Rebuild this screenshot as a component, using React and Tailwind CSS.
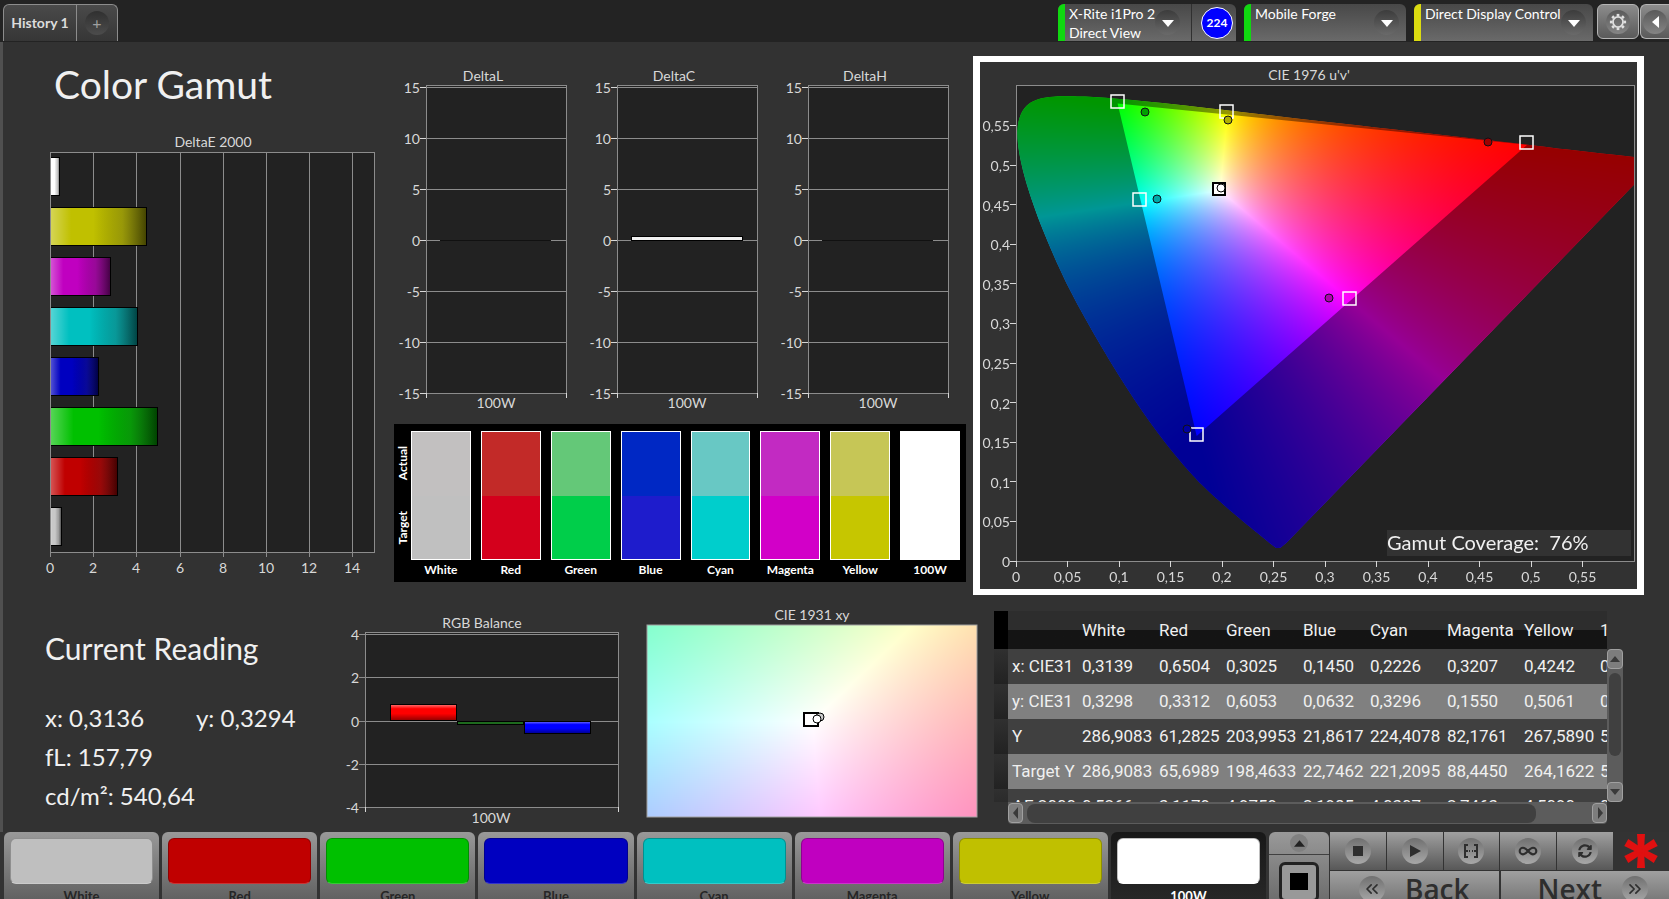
import { useEffect, useRef } from "react";
import { ChevronsLeft, ChevronsRight, Infinity as InfinityIcon } from "lucide-react";
import { FaSyncAlt } from "react-icons/fa";

const COLORS = [
  { name: "White", value: "#bfbfbf", actual: "#c2c0c0", target: "#c0c0c0" },
  { name: "Red", value: "#c00000", actual: "#c22a28", target: "#d4001c" },
  { name: "Green", value: "#00c000", actual: "#64c878", target: "#00ce4a" },
  { name: "Blue", value: "#0000c0", actual: "#0028c4", target: "#1e1ccc" },
  { name: "Cyan", value: "#00c0c0", actual: "#68c8c4", target: "#00cecc" },
  { name: "Magenta", value: "#c000c0", actual: "#c22ac2", target: "#d200c8" },
  { name: "Yellow", value: "#c0c000", actual: "#c6c656", target: "#c6c600" },
  { name: "100W", value: "#ffffff", actual: "#ffffff", target: "#ffffff" },
];

const DELTA_E = [
  { fill: "#ffffff", value: 0.46 },
  { fill: "#c0c000", value: 4.46 },
  { fill: "#c000c0", value: 2.8 },
  { fill: "#00c0c0", value: 4.04 },
  { fill: "#0000c0", value: 2.24 },
  { fill: "#00c000", value: 4.96 },
  { fill: "#c00000", value: 3.12 },
  { fill: "#c8c8c8", value: 0.53 },
];

const ROWS = [
  ["x: CIE31", "0,3139", "0,6504", "0,3025", "0,1450", "0,2226", "0,3207", "0,4242", "0,3136"],
  ["y: CIE31", "0,3298", "0,3312", "0,6053", "0,0632", "0,3296", "0,1550", "0,5061", "0,3294"],
  ["Y", "286,9083", "61,2825", "203,9953", "21,8617", "224,4078", "82,1761", "267,5890", "540,6400"],
  ["Target Y", "286,9083", "65,6989", "198,4633", "22,7462", "221,2095", "88,4450", "264,1622", "540,6400"],
  ["ΔE 2000", "0,5266", "3,1179", "4,9759", "2,1985", "4,0307", "2,7463", "4,5090", "0,4600"],
];

// spectral locus, CIE 1931 xy
const LOCUS = [
  [0.1741, 0.005], [0.1714, 0.0051], [0.1689, 0.0069], [0.1644, 0.0109],
  [0.1566, 0.0177], [0.144, 0.0297], [0.1355, 0.0399], [0.1241, 0.0578], [0.1096, 0.0868],
  [0.0913, 0.1327], [0.0687, 0.2007], [0.0454, 0.295], [0.0235, 0.4127], [0.0082, 0.5384],
  [0.0039, 0.6548], [0.0139, 0.7502], [0.0389, 0.812], [0.0743, 0.8338], [0.1142, 0.8262],
  [0.1547, 0.8059], [0.2296, 0.7543], [0.3016, 0.6923], [0.3731, 0.6245], [0.4441, 0.5547],
  [0.5125, 0.4866], [0.5752, 0.4242], [0.627, 0.3725], [0.6658, 0.334], [0.6915, 0.3083],
  [0.719, 0.2809], [0.7347, 0.2653],
];

const GAMUT = [[0.68, 0.32], [0.265, 0.69], [0.15, 0.06]];

// XYZ to linear RGB
const P3 = [[2.4935, -0.9314, -0.4027], [-0.8295, 1.7627, 0.0236], [0.0358, -0.0762, 0.9569]];
const REC709 = [[3.2406, -1.5372, -0.4986], [-0.9689, 1.8758, 0.0415], [0.0557, -0.204, 1.057]];

const toUv = ([x, y]) => {
  const d = -2 * x + 12 * y + 3;
  return [(4 * x) / d, (9 * y) / d];
};

const toXy = (u, v) => {
  const d = 6 * u - 16 * v + 12;
  return [(9 * u) / d, (4 * v) / d];
};

// linear colour of a chromaticity, scaled so its largest channel is full
const chroma = (matrix, x, y) => {
  const X = x / y;
  const Z = (1 - x - y) / y;
  const rgb = matrix.map((m) => Math.max(0, m[0] * X + m[1] + m[2] * Z));
  const max = Math.max(...rgb);
  return rgb.map((c) => (c / max) * 255);
};

const fillPixels = (ctx, w, h, colorAt) => {
  const img = ctx.createImageData(w, h);
  for (let j = 0; j < h; j++) {
    for (let i = 0; i < w; i++) {
      const [r, g, b] = colorAt(i, j);
      const k = (j * w + i) * 4;
      img.data[k] = r;
      img.data[k + 1] = g;
      img.data[k + 2] = b;
      img.data[k + 3] = 255;
    }
  }
  ctx.putImageData(img, 0, 0);
};

const UV_W = 618;
const UV_H = 476;

function UvCanvas() {
  const ref = useRef(null);

  useEffect(() => {
    const px = ([u, v]) => [u * 1030, UV_H - v * 792];

    const source = document.createElement("canvas");
    source.width = UV_W;
    source.height = UV_H;
    fillPixels(source.getContext("2d"), UV_W, UV_H, (i, j) => {
      const [x, y] = toXy(i / 1030, (UV_H - j) / 792);
      return chroma(P3, x, Math.max(y, 0.001));
    });

    // smooth curve through every locus point
    const locus = new Path2D();
    const pts = LOCUS.map((p) => px(toUv(p)));
    const at = (i) => pts[Math.min(Math.max(i, 0), pts.length - 1)];
    locus.moveTo(pts[0][0], pts[0][1]);
    for (let i = 0; i < pts.length - 1; i++) {
      const [a, b, c, d] = [at(i - 1), at(i), at(i + 1), at(i + 2)];
      locus.bezierCurveTo(
        b[0] + (c[0] - a[0]) / 6, b[1] + (c[1] - a[1]) / 6,
        c[0] - (d[0] - b[0]) / 6, c[1] - (d[1] - b[1]) / 6,
        c[0], c[1]
      );
    }
    locus.lineTo(pts[0][0] + 6, pts[0][1] - 5);
    locus.closePath();

    const outside = new Path2D(locus);
    GAMUT.map((p) => px(toUv(p))).forEach(([x, y], i) =>
      i === 0 ? outside.moveTo(x, y) : outside.lineTo(x, y)
    );
    outside.closePath();

    const ctx = ref.current.getContext("2d");
    ctx.clearRect(0, 0, UV_W, UV_H);
    ctx.save();
    ctx.clip(locus);
    ctx.drawImage(source, 0, 0);
    ctx.fillStyle = "rgba(0,0,0,0.41)";
    ctx.fill(outside, "evenodd");
    ctx.restore();
  }, []);

  return <canvas ref={ref} width={UV_W} height={UV_H} className="block w-full" />;
}

function XyCanvas() {
  const ref = useRef(null);

  useEffect(() => {
    const ctx = ref.current.getContext("2d");
    fillPixels(ctx, 330, 192, (i, j) =>
      chroma(REC709, 0.2877 + (i / 330) * 0.05, 0.354 - (j / 192) * 0.05)
    );
  }, []);

  return <canvas ref={ref} width={330} height={192} className="block w-full" />;
}

function DeltaEChart() {
  const x = (v) => Math.round(47 + v * 21.6);
  return (
    <svg viewBox="0 0 388 450" className="block w-full text-sm" role="img" aria-label="DeltaE 2000">
      <defs>
        <linearGradient id="barX">
          <stop offset="0" stopColor="#fff" stopOpacity="0.35" />
          <stop offset="0.22" stopColor="#fff" stopOpacity="0" />
          <stop offset="0.45" stopColor="#000" stopOpacity="0" />
          <stop offset="0.75" stopColor="#222" stopOpacity="0.25" />
          <stop offset="1" stopColor="#000" stopOpacity="0.65" />
        </linearGradient>
      </defs>
      <text x="210" y="16" textAnchor="middle" fill="#d8d8d8">DeltaE 2000</text>
      <g shapeRendering="crispEdges">
        <rect x="47" y="21" width="324" height="400" fill="#222" stroke="#8c8c8c" />
        {[0, 2, 4, 6, 8, 10, 12, 14].map((v) => (
          <path key={v} d={`M${x(v)} 21V426`} stroke="#8c8c8c" />
        ))}
        {DELTA_E.map((bar, i) => (
          <g key={i}>
            <rect x="47" y={26 + i * 50} width={bar.value * 21.6} height="38" fill={bar.fill} />
            <rect x="47" y={26 + i * 50} width={bar.value * 21.6} height="38" fill="url(#barX)" stroke="#000" />
          </g>
        ))}
        <path d="M47 21V421" stroke="#8c8c8c" />
      </g>
      {[0, 2, 4, 6, 8, 10, 12, 14].map((v) => (
        <text key={v} x={x(v)} y="442" textAnchor="middle" fill="#d8d8d8">{v}</text>
      ))}
    </svg>
  );
}

function DeltaChart({ title, value }) {
  const ticks = [15, 10, 5, 0, -5, -10, -15];
  return (
    <svg viewBox="0 0 191 354" className="block w-full text-sm" role="img" aria-label={title}>
      <text x="92" y="21" textAnchor="middle" fill="#d8d8d8">{title}</text>
      <g shapeRendering="crispEdges">
        <rect x="35" y="25" width="140" height="308" fill="#222" stroke="#8c8c8c" />
        {ticks.map((v, i) => (
          <g key={v}>
            <path d={`M35 ${27 + i * 51}H175`} stroke="#8c8c8c" />
            <path d={`M29 ${27 + i * 51}H35`} stroke="#d8d8d8" />
          </g>
        ))}
        <path d="M35 333V338M175 333V338" stroke="#d8d8d8" />
        {value > 0 ? (
          <rect x="49" y="176" width="111" height="4" fill="#f0f0f0" stroke="#000" />
        ) : (
          <path d="M49 180H160" stroke="#111" />
        )}
      </g>
      {ticks.map((v, i) => (
        <text key={v} x="29" y={33 + i * 51} textAnchor="end" fill="#d8d8d8">{v}</text>
      ))}
      <text x="105" y="348" textAnchor="middle" fill="#d8d8d8">100W</text>
    </svg>
  );
}

function SwatchPanel() {
  return (
    <div className="ml-[3px] mr-[7px] flex h-[158px] bg-black pt-[7px] text-white text-xs font-bold">
      <div className="flex w-[17px] flex-col items-center justify-around h-[129px]">
        <span className="rotate-180 [writing-mode:vertical-rl]">Actual</span>
        <span className="rotate-180 [writing-mode:vertical-rl]">Target</span>
      </div>
      <div className="grid flex-1 grid-cols-8 gap-[10px] pr-[6px]">
        {COLORS.map((c) => (
          <div key={c.name} className="text-center">
            <div className="flex h-[129px] flex-col border border-white">
              <div className="flex-1" style={{ background: c.actual }} />
              <div className="flex-1" style={{ background: c.target }} />
            </div>
            <p className="mt-[2px] leading-4">{c.name}</p>
          </div>
        ))}
      </div>
    </div>
  );
}

const TARGETS = [[138, 40], [247, 50], [547, 81], [160, 138], [370, 237], [217, 373]];
const READINGS = [
  [165, 50, "#00a000"], [248, 58, "#b0b000"], [508, 80, "#a00000"],
  [177, 137, "#00a8a8"], [349, 236, "#b000b0"], [207, 367, "#0000a0"],
];

function Cie1976() {
  const ticks = ["0", "0,05", "0,1", "0,15", "0,2", "0,25", "0,3", "0,35", "0,4", "0,45", "0,5", "0,55"];
  return (
    <svg viewBox="0 0 657 527" className="block w-full text-sm" role="img" aria-label="CIE 1976 u'v'">
      <text x="329" y="18" textAnchor="middle" fill="#d8d8d8">CIE 1976 u'v'</text>
      <rect x="36" y="23" width="618" height="476" fill="#222" />
      <foreignObject x="36" y="23" width="618" height="476">
        <UvCanvas />
      </foreignObject>
      <rect x="36" y="23" width="618" height="476" fill="none" stroke="#8c8c8c" shapeRendering="crispEdges" />
      {ticks.map((t, i) => (
        <g key={t}>
          <path
            d={`M${36 + i * 51.5} 499v6M30 ${499 - i * 39.6}h6`}
            stroke="#d8d8d8"
            shapeRendering="crispEdges"
          />
          <text x={36 + i * 51.5} y="520" textAnchor="middle" fill="#d8d8d8">{t}</text>
          <text x="30" y={505 - i * 39.6} textAnchor="end" fill="#d8d8d8">{t}</text>
        </g>
      ))}
      {TARGETS.map(([x, y]) => (
        <rect key={x} x={x - 7} y={y - 7} width="13" height="13" fill="none" stroke="#fff" strokeWidth="1.5" />
      ))}
      {READINGS.map(([x, y, fill]) => (
        <circle key={x} cx={x} cy={y} r="4" fill={fill} stroke="#101018" />
      ))}
      <rect x="233" y="121" width="12" height="12" fill="#fff" stroke="#000" strokeWidth="2" />
      <circle cx="241" cy="126" r="4" fill="#fff" stroke="#000" />
      <rect x="407" y="468" width="244" height="26" fill="#323232" />
      <text x="407" y="488" className="text-xl whitespace-pre" fill="#f0f0f0">Gamut Coverage:  76%</text>
    </svg>
  );
}

function RgbBalance() {
  const y = (i) => Math.round(37 + i * 43.3);
  return (
    <svg viewBox="0 0 291 235" className="block w-full text-sm" role="img" aria-label="RGB Balance">
      <defs>
        <linearGradient id="barY" x2="0" y2="1">
          <stop offset="0" stopColor="#fff" stopOpacity="0.5" />
          <stop offset="0.3" stopColor="#fff" stopOpacity="0" />
          <stop offset="0.6" stopColor="#000" stopOpacity="0" />
          <stop offset="1" stopColor="#000" stopOpacity="0.4" />
        </linearGradient>
      </defs>
      <text x="139" y="31" textAnchor="middle" fill="#d8d8d8">RGB Balance</text>
      <g shapeRendering="crispEdges">
        <rect x="22" y="35" width="253" height="175" fill="#222" stroke="#8c8c8c" />
        {[0, 1, 2, 3, 4].map((i) => (
          <path key={i} d={`M16 ${y(i)}H275`} stroke="#8c8c8c" />
        ))}
        <path d="M22 210V215M275 210V215" stroke="#d8d8d8" />
        <rect x="47" y="107" width="66" height="16" fill="#f00" />
        <rect x="47" y="107" width="66" height="16" fill="url(#barY)" stroke="#000" />
        <rect x="114" y="124" width="66" height="3" fill="#1e6a1e" stroke="#000" />
        <rect x="181" y="124" width="66" height="12" fill="#00f" />
        <rect x="181" y="124" width="66" height="12" fill="url(#barY)" stroke="#000" />
      </g>
      {[4, 2, 0, -2, -4].map((v, i) => (
        <text key={v} x="16" y={y(i) + 6} textAnchor="end" fill="#d8d8d8">{v}</text>
      ))}
      <text x="148" y="226" textAnchor="middle" fill="#d8d8d8">100W</text>
    </svg>
  );
}

function Cie1931() {
  return (
    <svg viewBox="0 0 357 235" className="block w-full text-sm" role="img" aria-label="CIE 1931 xy">
      <text x="178" y="23" textAnchor="middle" fill="#d8d8d8">CIE 1931 xy</text>
      <foreignObject x="13" y="28" width="330" height="192">
        <XyCanvas />
      </foreignObject>
      <rect x="13" y="28" width="330" height="192" fill="none" stroke="#a0a0a0" />
      <rect x="170" y="116" width="14" height="13" fill="#fff" stroke="#000" strokeWidth="2" />
      <circle cx="186" cy="120" r="4" fill="#ccc" stroke="#000" />
      <circle cx="183" cy="122" r="4" fill="#fff" stroke="#000" />
    </svg>
  );
}

function ScrollButton({ label, path, className }) {
  return (
    <button
      aria-label={label}
      className={`flex items-center justify-center rounded border border-[#a0a0a0] bg-[#7d7d7d] ${className}`}
    >
      <svg viewBox="0 0 12 12" className="size-3" fill="#3a3a3a"><path d={path} /></svg>
    </button>
  );
}

function ReadingsTable() {
  return (
    <div className="ml-[3px] mr-[46px] mt-[14px] grid grid-cols-[minmax(0,1fr)_16px] grid-rows-[191px_22px]">
      <div className="row-start-1 overflow-hidden">
        <table className="w-[679px] table-fixed border-collapse text-left text-[17px] leading-none whitespace-nowrap text-[#f0f0f0] font-[Roboto,sans-serif]">
          <colgroup>
            <col className="w-[14px]" />
            <col className="w-[70px]" />
            <col className="w-[77px]" />
            <col className="w-[67px]" />
            <col className="w-[77px]" />
            <col className="w-[67px]" />
            <col className="w-[77px]" />
            <col className="w-[77px]" />
            <col className="w-[76px]" />
            <col className="w-[77px]" />
          </colgroup>
          <thead>
            <tr className="h-[38px] bg-linear-to-b from-[#2d2d2d] from-50% to-[#141414] to-50%">
              <td className="bg-black" />
              <td />
              {COLORS.map((c) => (
                <th key={c.name} scope="col" className="p-0 pl-1 font-normal">{c.name}</th>
              ))}
            </tr>
          </thead>
          <tbody>
            {ROWS.map(([label, ...cells]) => (
              <tr key={label} className="h-[35px] bg-[#404040] even:bg-[#808080]">
                <td className="bg-linear-to-b from-[#303030] to-[#222]" />
                <th scope="row" className="p-0 pl-1 font-normal">{label}</th>
                {cells.map((cell, i) => (
                  <td key={i} className="p-0 pl-1">{cell}</td>
                ))}
              </tr>
            ))}
          </tbody>
        </table>
      </div>
      <div className="mt-[38px] flex flex-col rounded bg-[#5c5c5c]">
        <ScrollButton label="Scroll up" path="M1 9L6 3L11 9Z" className="h-5 w-full" />
        <div className="mx-[2px] mt-1 h-[83px] rounded-lg bg-[#404040]" />
        <ScrollButton label="Scroll down" path="M1 3L6 9L11 3Z" className="mt-auto h-5 w-full" />
      </div>
      <div className="ml-[14px] flex items-center rounded-b bg-[#5c5c5c]">
        <ScrollButton label="Scroll left" path="M8 0L3 6L8 12Z" className="h-5 w-[15px]" />
        <div className="ml-1 h-[19px] w-[85%] rounded-lg bg-[#404040]" />
        <ScrollButton label="Scroll right" path="M4 0L9 6L4 12Z" className="ml-auto h-5 w-[15px]" />
      </div>
    </div>
  );
}

function DropButton({ label }) {
  return (
    <button
      aria-label={label}
      className="mt-[6px] mr-[7px] flex size-[25px] shrink-0 items-center justify-center rounded-full bg-linear-to-b from-[#3c3c3c] to-[#6a6a6a]"
    >
      <svg viewBox="0 0 12 7" className="mt-px h-[7px] w-3" fill="#fff"><path d="M0 0H12L6 7Z" /></svg>
    </button>
  );
}

function Header() {
  return (
    <header className="flex h-[42px] items-start justify-between bg-[#232323] pt-1 pl-[3px]">
      <nav className="flex h-[37px] rounded-t-md border border-b-0 border-[#8c8c8c] bg-linear-to-b from-[#4a4a4a] to-[#363636]">
        <button className="w-[73px] border-r border-[#8c8c8c] text-sm font-bold text-[#dcdcdc]">History 1</button>
        <button aria-label="Add history" className="flex w-10 items-center justify-center">
          <span className="flex size-6 items-center justify-center rounded-full bg-linear-to-b from-[#303030] to-[#4c4c4c] text-[#a0a0a0]">+</span>
        </button>
      </nav>

      <div className="flex text-sm leading-[19px] text-white">
        <div className="flex h-[37px] w-[178px] overflow-hidden rounded-t-md bg-linear-to-b from-[#484848] to-[#6a6a6a]">
          <div className="w-[7px] bg-[#10d810]" />
          <p className="flex-1 pl-1 whitespace-nowrap">
            X-Rite i1Pro 2<br />Direct View
          </p>
          <DropButton label="Meter options" />
          <div className="ml-1 flex w-[45px] items-center justify-end border-l border-[#303030] pr-[3px]">
            <span className="flex size-8 items-center justify-center rounded-full border border-white bg-[#0000ff] text-xs font-bold">224</span>
          </div>
        </div>
        <div className="ml-2 flex h-[37px] w-[162px] overflow-hidden rounded-t-md bg-linear-to-b from-[#484848] to-[#6a6a6a]">
          <div className="w-[7px] bg-[#10d810]" />
          <p className="flex-1 pl-1">Mobile Forge</p>
          <DropButton label="Source options" />
        </div>
        <div className="ml-2 flex h-[37px] w-[179px] overflow-hidden rounded-t-md bg-linear-to-b from-[#484848] to-[#6a6a6a]">
          <div className="w-[7px] bg-[#dcdc10]" />
          <p className="flex-1 pl-1 whitespace-nowrap">Direct Display Control</p>
          <DropButton label="Display options" />
        </div>
        <button aria-label="Settings" className="ml-1 flex h-[35px] w-[42px] items-center justify-center rounded-md border border-[#b4b4b4] bg-linear-to-b from-[#8c8c8c] to-[#5a5a5a]">
          <span className="flex size-6 items-center justify-center rounded-full bg-linear-to-b from-[#5a5a5a] to-[#858585]">
            <svg viewBox="-10 -10 20 20" className="size-[18px]" fill="none" stroke="#e0e0e0">
              <circle r="5.6" strokeWidth="2" />
              {[0, 45, 90, 135, 180, 225, 270, 315].map((a) => (
                <path key={a} d="M0 -6.4V-9" strokeWidth="3" transform={`rotate(${a})`} />
              ))}
            </svg>
          </span>
        </button>
        <button aria-label="Collapse panel" className="ml-px flex h-[35px] w-[29px] items-center justify-center rounded-l-md border border-r-0 border-[#b4b4b4] bg-linear-to-b from-[#8c8c8c] to-[#5a5a5a]">
          <span className="flex size-6 items-center justify-center rounded-full bg-linear-to-b from-[#5a5a5a] to-[#858585]">
            <svg viewBox="0 0 7 12" className="h-3 w-[7px]" fill="#fff"><path d="M7 0V12L0 6Z" /></svg>
          </span>
        </button>
      </div>
    </header>
  );
}

function Knob({ children }) {
  return (
    <span className="flex size-[26px] shrink-0 items-center justify-center rounded-full bg-linear-to-b from-[#707070] to-[#a8a8a8] text-[#2e2e2e]">
      {children}
    </span>
  );
}

function Footer() {
  return (
    <footer className="grid h-[67px] shrink-0 grid-cols-[1265fr_61fr_340fr] overflow-hidden bg-[#333] pl-[3px]">
      <div className="grid grid-cols-8 gap-[3px] pr-[2px] pl-px">
        {COLORS.map((c) => (
          <button
            key={c.name}
            className={
              c.name === "100W"
                ? "h-[90px] rounded-t-md bg-linear-to-b from-[#181818] to-[#2c2c2c] px-[6px] pt-[6px] text-[13px] font-bold text-white"
                : "h-[90px] rounded-t-md bg-linear-to-b from-[#999] to-[#505050] px-[6px] pt-[6px] text-[13px] font-bold text-[#262626]"
            }
          >
            <span
              className="block h-[46px] rounded-md border border-black/25 border-b-white/20"
              style={{ background: c.value }}
            />
            <span className="mt-[3px] block h-[35px] leading-[18px]">{c.name}</span>
          </button>
        ))}
      </div>

      <div className="ml-px flex flex-col items-stretch rounded-t-md bg-linear-to-b from-[#999] to-[#606060]">
        <button aria-label="Expand" className="flex h-[23px] items-center justify-center border-b border-[#404040]">
          <span className="flex size-[18px] items-center justify-center rounded-full bg-[#808080]">
            <svg viewBox="0 0 12 7" className="h-[7px] w-[11px]" fill="#222"><path d="M0 7L6 0L12 7Z" /></svg>
          </span>
        </button>
        <button aria-label="Pattern window" className="mx-auto mt-[7px] flex h-10 w-10 shrink-0 justify-center rounded-md border-[3px] border-[#222] bg-[#999] pt-2">
          <span className="block h-[17px] w-[18px] bg-black" />
        </button>
      </div>

      <div className="pl-px">
        <div className="flex h-[38px]">
          <div className="grid flex-1 grid-cols-5 gap-px">
            <button aria-label="Stop" className="flex items-center justify-center bg-linear-to-b from-[#a0a0a0] to-[#585858]">
              <Knob><span className="block size-[10px] bg-[#2e2e2e]" /></Knob>
            </button>
            <button aria-label="Play" className="flex items-center justify-center bg-linear-to-b from-[#a0a0a0] to-[#585858]">
              <Knob><svg viewBox="0 0 12 12" className="size-3" fill="#2e2e2e"><path d="M1 0L12 6L1 12Z" /></svg></Knob>
            </button>
            <button aria-label="Measure range" className="flex items-center justify-center bg-linear-to-b from-[#a0a0a0] to-[#585858]">
              <Knob>
                <svg viewBox="0 0 16 14" className="h-[14px] w-4" fill="none" stroke="#2e2e2e" strokeWidth="2">
                  <path d="M5 1H2V13H5M11 1H14V13H11M2 7H5M11 7H14M6 7H7M9 7H10" />
                </svg>
              </Knob>
            </button>
            <button aria-label="Continuous" className="flex items-center justify-center bg-linear-to-b from-[#a0a0a0] to-[#585858]">
              <Knob><InfinityIcon className="size-5" strokeWidth={2.5} /></Knob>
            </button>
            <button aria-label="Refresh" className="flex items-center justify-center bg-linear-to-b from-[#a0a0a0] to-[#585858]">
              <Knob><FaSyncAlt className="size-[14px]" /></Knob>
            </button>
          </div>
          <div className="flex w-14 items-center justify-center">
            <svg viewBox="-18 -18 36 36" className="size-9" fill="#e01010">
              {[0, 60, 120, 180, 240, 300].map((a) => (
                <path key={a} d="M-3 0L-4 -17H4L3 0Z" transform={`rotate(${a})`} />
              ))}
            </svg>
          </div>
        </div>
        <div className="mt-px grid grid-cols-2 gap-[2px] text-[28px] leading-9 font-semibold text-[#2e2e2e] font-['Open_Sans',sans-serif]">
          <button className="flex h-9 items-center justify-center gap-5 bg-linear-to-b from-[#a0a0a0] to-[#707070]">
            <Knob><ChevronsLeft className="size-5" /></Knob>
            Back
          </button>
          <button className="flex h-9 items-center justify-center gap-5 bg-linear-to-b from-[#a0a0a0] to-[#707070] pl-4">
            Next
            <Knob><ChevronsRight className="size-5" /></Knob>
          </button>
        </div>
      </div>
    </footer>
  );
}

export default function App() {
  return (
    <div className="flex h-screen flex-col overflow-hidden bg-[#323232] font-[Lato,sans-serif]">
      <Header />

      <main className="min-h-0 flex-1 overflow-hidden border-l-[3px] border-[#505050]">
        <section className="grid h-[555px] grid-cols-[388fr_582fr_696fr]">
          <div>
            <h1 className="pt-[18px] pl-[51px] text-[39px] leading-[48px] text-[#f0f0f0]">Color Gamut</h1>
            <div className="mt-[23px]">
              <DeltaEChart />
            </div>
          </div>

          <div className="pt-[18px]">
            <div className="grid grid-cols-3 pr-[9px]">
              <DeltaChart title="DeltaL" value={0} />
              <DeltaChart title="DeltaC" value={0.4} />
              <DeltaChart title="DeltaH" value={0} />
            </div>
            <div className="mt-[10px]">
              <SwatchPanel />
            </div>
          </div>

          <div className="pt-[14px] pr-[25px]">
            <div className="border-x-[7px] border-y-[6px] border-white">
              <Cie1976 />
            </div>
          </div>
        </section>

        <section className="grid grid-cols-[340fr_291fr_357fr_678fr]">
          <div className="pl-[42px] text-2xl leading-[39px] text-[#f0f0f0]">
            <h2 className="pt-8 text-[30px]">Current Reading</h2>
            <div className="mt-[30px] grid grid-cols-[151px_1fr]">
              <p>x: 0,3136</p>
              <p>y: 0,3294</p>
            </div>
            <p>fL: 157,79</p>
            <p>cd/m²: 540,64</p>
          </div>
          <RgbBalance />
          <Cie1931 />
          <ReadingsTable />
        </section>
      </main>

      <Footer />
    </div>
  );
}
